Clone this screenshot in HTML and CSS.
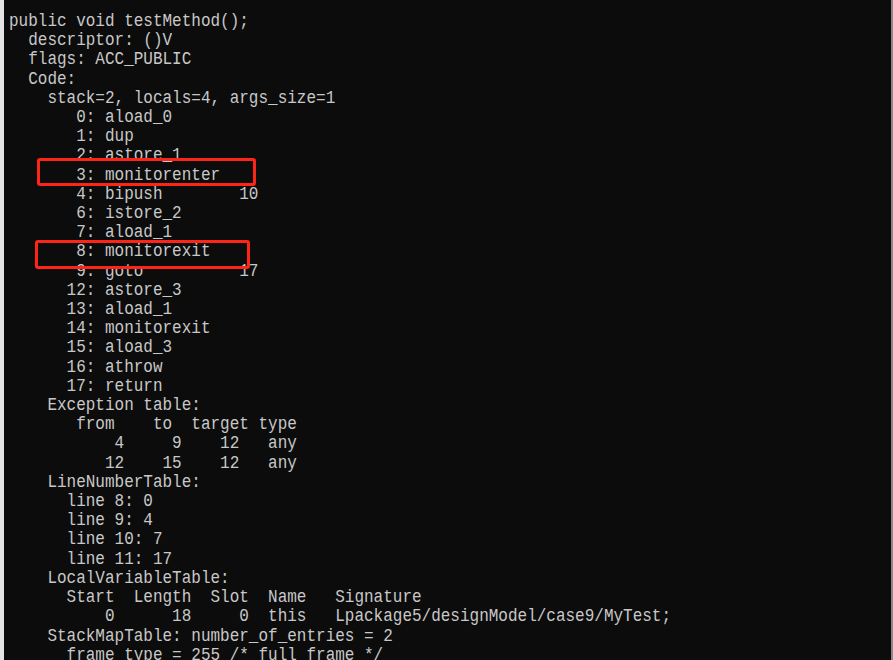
FILE: index.html
```
<!DOCTYPE html>
<html lang="en">
<head>
<meta charset="utf-8">
<title>javap output</title>
<link rel="stylesheet" href="styles.css">
</head>
<body>
<div class="screen">
<pre class="console">public void testMethod();
  descriptor: ()V
  flags: ACC_PUBLIC
  Code:
    stack=2, locals=4, args_size=1
       0: aload_0
       1: dup
       2: astore_1
       3: monitorenter
       4: bipush        10
       6: istore_2
       7: aload_1
       8: monitorexit
       9: goto          17
      12: astore_3
      13: aload_1
      14: monitorexit
      15: aload_3
      16: athrow
      17: return
    Exception table:
       from    to  target type
           4     9    12   any
          12    15    12   any
    LineNumberTable:
      line 8: 0
      line 9: 4
      line 10: 7
      line 11: 17
    LocalVariableTable:
      Start  Length  Slot  Name   Signature
          0      18     0  this   Lpackage5/designModel/case9/MyTest;
    StackMapTable: number_of_entries = 2
      frame_type = 255 /* full frame */</pre>
<div class="mark mark-enter"></div>
<div class="mark mark-exit"></div>
</div>
</body>
</html>
```

FILE: styles.css
```
html, body {
  margin: 0;
  padding: 0;
  background: #0c0c0c;
}

.screen {
  position: relative;
  box-sizing: border-box;
  width: 893px;
  height: 660px;
  overflow: hidden;
  background: #0c0c0c;
  border-left: 4px solid #e4e4e4;
  border-right: 2px solid #8a8a8a;
  padding: 12px 0 0 5px;
}

.console {
  margin: 0;
  font-family: "Liberation Mono", monospace;
  font-size: 19.2px;
  line-height: 19.2px;
  color: #c8c8c8;
  white-space: pre;
  transform: scaleX(0.8333);
  transform-origin: 0 0;
}

.mark {
  position: absolute;
  box-sizing: border-box;
  border: 3px solid #ff2418;
  border-radius: 3px;
}

.mark-enter {
  left: 33px;
  top: 158px;
  width: 219px;
  height: 28px;
}

.mark-exit {
  left: 31px;
  top: 240px;
  width: 215px;
  height: 29px;
}
```
